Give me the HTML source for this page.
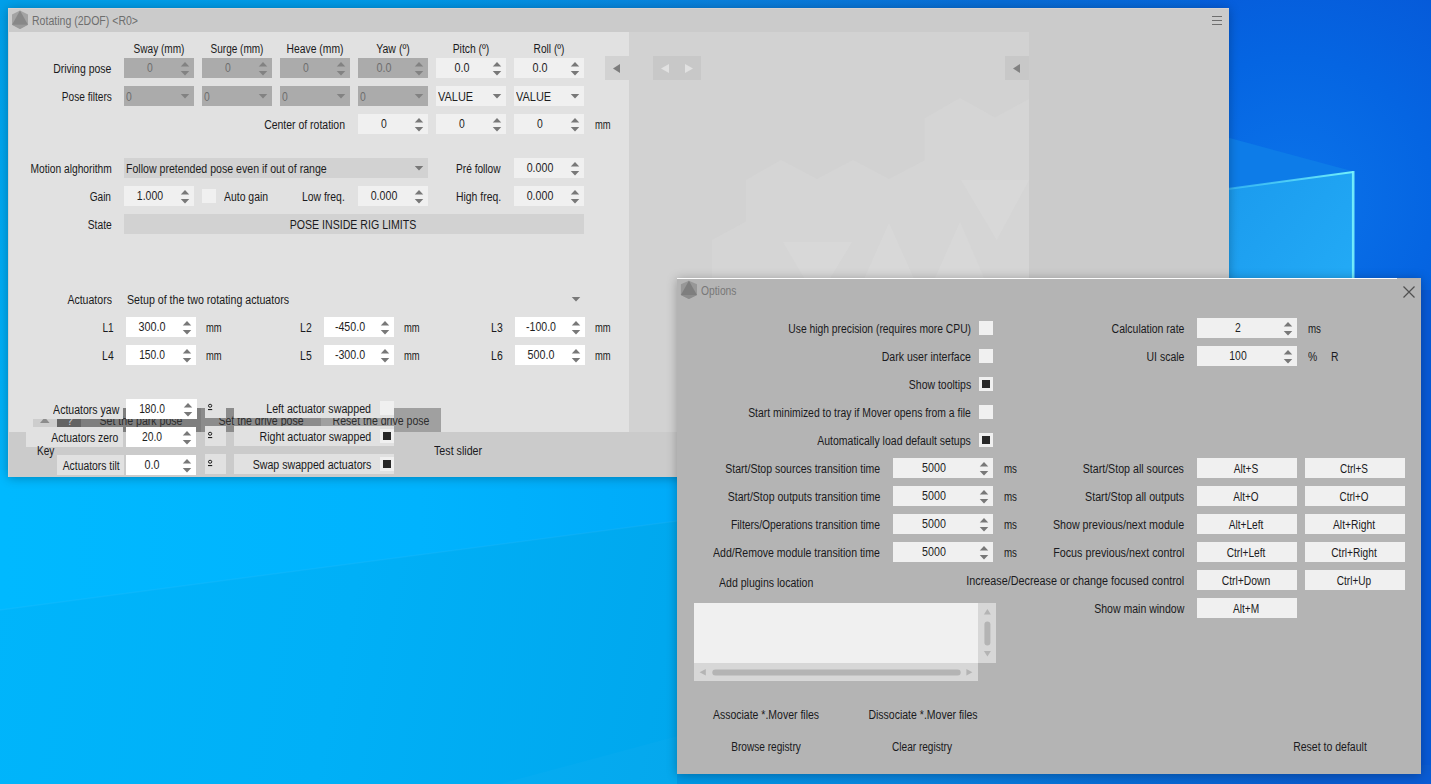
<!DOCTYPE html>
<html><head><meta charset="utf-8"><title>Mover</title><style>
html,body{margin:0;padding:0}
body{width:1431px;height:784px;overflow:hidden;position:relative;background:#00a8ee;font-family:"Liberation Sans",sans-serif;font-size:12.3px;color:#1a1a20}
.b{position:absolute;display:block}
.t{position:absolute;white-space:nowrap;line-height:14px;height:14px;--k:.845}
.t.l{transform-origin:0 50%;transform:scaleX(var(--k))}
.t.r{transform-origin:100% 50%;transform:scaleX(var(--k))}
.t.c{transform-origin:50% 50%;transform:translateX(-50%) scaleX(var(--k))}
#wp{position:absolute;left:0;top:0;width:1431px;height:784px}
</style></head>
<body>
<svg id="wp" width="1431" height="784" viewBox="0 0 1431 784">
<defs>
<linearGradient id="gh" x1="0" y1="0" x2="1431" y2="0" gradientUnits="userSpaceOnUse">
<stop offset="0" stop-color="#009fe9"/><stop offset=".28" stop-color="#0098e6"/><stop offset=".5" stop-color="#0a80dc"/><stop offset=".7" stop-color="#086cd6"/><stop offset=".86" stop-color="#0666dc"/><stop offset="1" stop-color="#0858d0"/>
</linearGradient>
<linearGradient id="gl" x1="0" y1="560" x2="690" y2="700" gradientUnits="userSpaceOnUse">
<stop offset="0" stop-color="#00b5fb"/><stop offset=".5" stop-color="#00b0f7"/><stop offset="1" stop-color="#00a7ed"/>
</linearGradient>
<linearGradient id="gv" x1="0" y1="0" x2="0" y2="520" gradientUnits="userSpaceOnUse">
<stop offset="0" stop-color="#00b5fb" stop-opacity="0"/><stop offset="1" stop-color="#00b5fb" stop-opacity="1"/>
</linearGradient>
<radialGradient id="gr" cx="1290" cy="200" r="260" gradientUnits="userSpaceOnUse">
<stop offset="0" stop-color="#0b74ea"/><stop offset=".55" stop-color="#0565e2"/><stop offset="1" stop-color="#0659d8"/>
</radialGradient>
<linearGradient id="gp" x1="1229" y1="180" x2="1354" y2="290" gradientUnits="userSpaceOnUse">
<stop offset="0" stop-color="#1b9bee"/><stop offset="1" stop-color="#23abf6"/>
</linearGradient>
<linearGradient id="gu" x1="0" y1="0" x2="700" y2="0" gradientUnits="userSpaceOnUse"><stop offset="0" stop-color="#00b9ff"/><stop offset=".6" stop-color="#00b3fe"/><stop offset="1" stop-color="#00aaf8"/></linearGradient>
<linearGradient id="gb" x1="677" y1="0" x2="1431" y2="0" gradientUnits="userSpaceOnUse"><stop offset="0" stop-color="#0098e4"/><stop offset=".3" stop-color="#0a84de"/><stop offset=".58" stop-color="#086cd4"/><stop offset=".85" stop-color="#0a5cce"/><stop offset="1" stop-color="#0a5cd4"/></linearGradient>
<linearGradient id="gs" x1="1229" y1="0" x2="1354" y2="0" gradientUnits="userSpaceOnUse"><stop offset="0" stop-color="#3fc4f6" stop-opacity=".7"/><stop offset="1" stop-color="#74f0fa"/></linearGradient>
</defs>
<rect width="1431" height="784" fill="url(#gh)"/>
<rect x="0" y="0" width="40" height="520" fill="url(#gv)"/>
<rect x="0" y="470" width="700" height="314" fill="url(#gl)"/>
<path d="M0 470H700V518L0 610Z" fill="url(#gu)"/>
<path d="M0 610L700 518" stroke="#fff" stroke-opacity=".04" stroke-width="1.5" fill="none"/>
<path d="M500 784L700 730V784Z" fill="#fff" fill-opacity=".02"/>
<rect x="1200" y="0" width="231" height="300" fill="url(#gr)"/>
<rect x="1400" y="290" width="31" height="494" fill="#0759d6"/>
<rect x="677" y="765" width="754" height="19" fill="url(#gb)"/>
<path d="M1200 130L1353.500 171.500L1200 192Z" fill="#0d7ce8"/>
<path d="M1200 192.800L1353 172V300H1200Z" fill="url(#gp)"/>
<path d="M1200 192.800L1353.200 172" stroke="url(#gs)" stroke-width="2" fill="none"/><path d="M1353.200 171V300" stroke="#7af2fb" stroke-width="2.6" fill="none" stroke-opacity=".92"/>
</svg>

<div class="b" style="left:8px;top:8px;width:1221px;height:469px;background:#cbcbcb;box-shadow:0 1px 10px rgba(0,0,0,.28)"></div>
<div class="b" style="left:8px;top:8px;width:1221px;height:1px;background:#d8d2d0;"></div>
<div class="b" style="left:8px;top:8px;width:1px;height:469px;background:#d4d0ce;"></div>
<div class="b" style="left:9px;top:32px;width:620px;height:400px;background:#e1e1e1;"></div>
<div class="b" style="left:629px;top:32px;width:400px;height:400px;background:#d2d2d2;"></div>
<svg class="b" style="left:629px;top:32px" width="400" height="400" viewBox="0 0 400 400"><g transform="translate(-629 -32)"><path d="M746 180L781 160 817 179 853 160 889 179 924.4 160.6V118.4L960 98 995 117.500 1029 99V432H712V240L746 221.500Z" fill="#d5d5d5"/><path d="M783 242H852L817 300Z M889 223L864.500 278 840 330H938L913.600 278Z M960 222L935 278H984Z M961 180H1029L996.700 240Z" fill="#d8d8d8"/></g></svg>
<svg class="b" style="left:10px;top:9px" width="20" height="22" viewBox="0 0 20 22"><path d="M10 1.6L18 5.5V15.8L10 20 2 15.8V5.5z" fill="#a3a3a3"/><path d="M10 15.8L18 15.8 10 20 2 15.8z" fill="#9a9a9a"/><path d="M10 1.6L18 15.8H2z" fill="#888888"/></svg>
<div class="t l" style="left:32px;top:13.74px;color:#6e6e6e;--k:0.857;">Rotating (2DOF) &lt;R0&gt;</div>
<div class="b" style="left:1212px;top:16px;width:10px;height:1px;background:#6e6e6e;"></div>
<div class="b" style="left:1212px;top:20px;width:10px;height:1px;background:#6e6e6e;"></div>
<div class="b" style="left:1212px;top:24px;width:10px;height:1px;background:#6e6e6e;"></div>
<div class="t c" style="left:159px;top:41.74px;color:#1a1a20;--k:0.819;">Sway (mm)</div>
<div class="t c" style="left:237px;top:41.74px;color:#1a1a20;--k:0.815;">Surge (mm)</div>
<div class="t c" style="left:315px;top:41.74px;color:#1a1a20;--k:0.841;">Heave (mm)</div>
<div class="t c" style="left:393px;top:41.74px;color:#1a1a20;--k:0.856;">Yaw (º)</div>
<div class="t c" style="left:471px;top:41.74px;color:#1a1a20;--k:0.842;">Pitch (º)</div>
<div class="t c" style="left:549px;top:41.74px;color:#1a1a20;--k:0.826;">Roll (º)</div>
<div class="t r" style="right:1319.6px;top:61.74px;color:#1a1a20;--k:0.851;">Driving pose</div>
<div class="t r" style="right:1319.6px;top:89.74px;color:#1a1a20;--k:0.822;">Pose filters</div>
<div class="b" style="left:124px;top:58px;width:70px;height:20px;background:#ababab;"></div>
<svg class="b" style="left:124px;top:58px" width="70" height="20" viewBox="0 0 70 20"><path d="M56.75 8.5L61 4L65.25 8.5Z" fill="#828282"/><path d="M56.75 13L61 17.5L65.25 13Z" fill="#828282"/></svg>
<div class="t c" style="left:150.4px;top:60.74px;color:#6e6e6e;">0</div>
<div class="b" style="left:202px;top:58px;width:70px;height:20px;background:#ababab;"></div>
<svg class="b" style="left:202px;top:58px" width="70" height="20" viewBox="0 0 70 20"><path d="M56.75 8.5L61 4L65.25 8.5Z" fill="#828282"/><path d="M56.75 13L61 17.5L65.25 13Z" fill="#828282"/></svg>
<div class="t c" style="left:228.4px;top:60.74px;color:#6e6e6e;">0</div>
<div class="b" style="left:280px;top:58px;width:70px;height:20px;background:#ababab;"></div>
<svg class="b" style="left:280px;top:58px" width="70" height="20" viewBox="0 0 70 20"><path d="M56.75 8.5L61 4L65.25 8.5Z" fill="#828282"/><path d="M56.75 13L61 17.5L65.25 13Z" fill="#828282"/></svg>
<div class="t c" style="left:306.4px;top:60.74px;color:#6e6e6e;">0</div>
<div class="b" style="left:358px;top:58px;width:70px;height:20px;background:#ababab;"></div>
<svg class="b" style="left:358px;top:58px" width="70" height="20" viewBox="0 0 70 20"><path d="M56.75 8.5L61 4L65.25 8.5Z" fill="#828282"/><path d="M56.75 13L61 17.5L65.25 13Z" fill="#828282"/></svg>
<div class="t c" style="left:384.4px;top:60.74px;color:#6e6e6e;--k:0.877;">0.0</div>
<div class="b" style="left:436px;top:58px;width:70px;height:20px;background:#f0f0f0;"></div>
<svg class="b" style="left:436px;top:58px" width="70" height="20" viewBox="0 0 70 20"><path d="M56.75 8.5L61 4L65.25 8.5Z" fill="#787878"/><path d="M56.75 13L61 17.5L65.25 13Z" fill="#787878"/></svg>
<div class="t c" style="left:462.4px;top:60.74px;color:#1e1e1e;--k:0.877;">0.0</div>
<div class="b" style="left:514px;top:58px;width:70px;height:20px;background:#f0f0f0;"></div>
<svg class="b" style="left:514px;top:58px" width="70" height="20" viewBox="0 0 70 20"><path d="M56.75 8.5L61 4L65.25 8.5Z" fill="#787878"/><path d="M56.75 13L61 17.5L65.25 13Z" fill="#787878"/></svg>
<div class="t c" style="left:540.4px;top:60.74px;color:#1e1e1e;--k:0.877;">0.0</div>
<div class="b" style="left:124px;top:86px;width:70px;height:20px;background:#ababab;"></div>
<svg class="b" style="left:124px;top:86px" width="70" height="20" viewBox="0 0 70 20"><path d="M56.75 8L61 12.5L65.25 8Z" fill="#828282"/></svg>
<div class="t l" style="left:126px;top:89.74px;color:#6e6e6e;">0</div>
<div class="b" style="left:202px;top:86px;width:70px;height:20px;background:#ababab;"></div>
<svg class="b" style="left:202px;top:86px" width="70" height="20" viewBox="0 0 70 20"><path d="M56.75 8L61 12.5L65.25 8Z" fill="#828282"/></svg>
<div class="t l" style="left:204px;top:89.74px;color:#6e6e6e;">0</div>
<div class="b" style="left:280px;top:86px;width:70px;height:20px;background:#ababab;"></div>
<svg class="b" style="left:280px;top:86px" width="70" height="20" viewBox="0 0 70 20"><path d="M56.75 8L61 12.5L65.25 8Z" fill="#828282"/></svg>
<div class="t l" style="left:282px;top:89.74px;color:#6e6e6e;">0</div>
<div class="b" style="left:358px;top:86px;width:70px;height:20px;background:#ababab;"></div>
<svg class="b" style="left:358px;top:86px" width="70" height="20" viewBox="0 0 70 20"><path d="M56.75 8L61 12.5L65.25 8Z" fill="#828282"/></svg>
<div class="t l" style="left:360px;top:89.74px;color:#6e6e6e;">0</div>
<div class="b" style="left:436px;top:86px;width:70px;height:20px;background:#f0f0f0;"></div>
<svg class="b" style="left:436px;top:86px" width="70" height="20" viewBox="0 0 70 20"><path d="M56.75 8L61 12.5L65.25 8Z" fill="#787878"/></svg>
<div class="t l" style="left:438px;top:89.74px;color:#1e1e1e;--k:0.893;">VALUE</div>
<div class="b" style="left:514px;top:86px;width:70px;height:20px;background:#f0f0f0;"></div>
<svg class="b" style="left:514px;top:86px" width="70" height="20" viewBox="0 0 70 20"><path d="M56.75 8L61 12.5L65.25 8Z" fill="#787878"/></svg>
<div class="t l" style="left:516px;top:89.74px;color:#1e1e1e;--k:0.893;">VALUE</div>
<div class="t r" style="right:1086px;top:117.74px;color:#1a1a20;--k:0.851;">Center of rotation</div>
<div class="b" style="left:358px;top:114px;width:70px;height:20px;background:#f0f0f0;"></div>
<svg class="b" style="left:358px;top:114px" width="70" height="20" viewBox="0 0 70 20"><path d="M56.75 8.5L61 4L65.25 8.5Z" fill="#787878"/><path d="M56.75 13L61 17.5L65.25 13Z" fill="#787878"/></svg>
<div class="t c" style="left:384.4px;top:116.74px;color:#1e1e1e;">0</div>
<div class="b" style="left:436px;top:114px;width:70px;height:20px;background:#f0f0f0;"></div>
<svg class="b" style="left:436px;top:114px" width="70" height="20" viewBox="0 0 70 20"><path d="M56.75 8.5L61 4L65.25 8.5Z" fill="#787878"/><path d="M56.75 13L61 17.5L65.25 13Z" fill="#787878"/></svg>
<div class="t c" style="left:462.4px;top:116.74px;color:#1e1e1e;">0</div>
<div class="b" style="left:514px;top:114px;width:70px;height:20px;background:#f0f0f0;"></div>
<svg class="b" style="left:514px;top:114px" width="70" height="20" viewBox="0 0 70 20"><path d="M56.75 8.5L61 4L65.25 8.5Z" fill="#787878"/><path d="M56.75 13L61 17.5L65.25 13Z" fill="#787878"/></svg>
<div class="t c" style="left:540.4px;top:116.74px;color:#1e1e1e;">0</div>
<div class="t l" style="left:594.5px;top:117.74px;color:#1a1a20;--k:0.761;">mm</div>
<div class="b" style="left:605px;top:56px;width:24px;height:24px;background:#d2d2d2;"></div>
<svg class="b" style="left:605px;top:56px" width="24" height="24" viewBox="0 0 24 24"><path d="M8 12.5L15 8v9z" fill="#7d7d7d"/></svg>
<div class="b" style="left:653px;top:56px;width:48px;height:24px;background:#c8c8c8;"></div>
<svg class="b" style="left:653px;top:56px" width="48" height="24" viewBox="0 0 48 24"><path d="M8 12.5L16 8v9z" fill="#e1e1e1"/><path d="M40 12.5L32 8v9z" fill="#e1e1e1"/></svg>
<div class="b" style="left:1005px;top:56px;width:24px;height:24px;background:#c8c8c8;"></div>
<svg class="b" style="left:1005px;top:56px" width="24" height="24" viewBox="0 0 24 24"><path d="M8 12.5L15 8v9z" fill="#828282"/></svg>
<div class="t r" style="right:1319.6px;top:161.74px;color:#1a1a20;--k:0.832;">Motion alghorithm</div>
<div class="b" style="left:124px;top:158px;width:304px;height:20px;background:#d2d2d2;"></div>
<svg class="b" style="left:124px;top:158px" width="304" height="20" viewBox="0 0 304 20"><path d="M290.75 8L295 12.5L299.25 8Z" fill="#787878"/></svg>
<div class="t l" style="left:126px;top:161.74px;color:#1e1e1e;--k:0.861;">Follow pretended pose even if out of range</div>
<div class="t l" style="left:456px;top:161.74px;color:#1a1a20;--k:0.826;">Pré follow</div>
<div class="b" style="left:514px;top:158px;width:70px;height:20px;background:#f0f0f0;"></div>
<svg class="b" style="left:514px;top:158px" width="70" height="20" viewBox="0 0 70 20"><path d="M56.75 8.5L61 4L65.25 8.5Z" fill="#787878"/><path d="M56.75 13L61 17.5L65.25 13Z" fill="#787878"/></svg>
<div class="t c" style="left:540.4px;top:160.74px;color:#1e1e1e;--k:0.864;">0.000</div>
<div class="t r" style="right:1319.6px;top:189.74px;color:#1a1a20;--k:0.82;">Gain</div>
<div class="b" style="left:124px;top:186px;width:70px;height:20px;background:#f0f0f0;"></div>
<svg class="b" style="left:124px;top:186px" width="70" height="20" viewBox="0 0 70 20"><path d="M56.75 8.5L61 4L65.25 8.5Z" fill="#787878"/><path d="M56.75 13L61 17.5L65.25 13Z" fill="#787878"/></svg>
<div class="t c" style="left:150.4px;top:188.74px;color:#1e1e1e;--k:0.854;">1.000</div>
<div class="b" style="left:202px;top:189px;width:14px;height:14px;background:#f0f0f0;"></div>
<div class="t l" style="left:224px;top:189.74px;color:#1a1a20;--k:0.848;">Auto gain</div>
<div class="t l" style="left:302px;top:189.74px;color:#1a1a20;--k:0.846;">Low freq.</div>
<div class="b" style="left:358px;top:186px;width:70px;height:20px;background:#f0f0f0;"></div>
<svg class="b" style="left:358px;top:186px" width="70" height="20" viewBox="0 0 70 20"><path d="M56.75 8.5L61 4L65.25 8.5Z" fill="#787878"/><path d="M56.75 13L61 17.5L65.25 13Z" fill="#787878"/></svg>
<div class="t c" style="left:384.4px;top:188.74px;color:#1e1e1e;--k:0.864;">0.000</div>
<div class="t l" style="left:456px;top:189.74px;color:#1a1a20;--k:0.846;">High freq.</div>
<div class="b" style="left:514px;top:186px;width:70px;height:20px;background:#f0f0f0;"></div>
<svg class="b" style="left:514px;top:186px" width="70" height="20" viewBox="0 0 70 20"><path d="M56.75 8.5L61 4L65.25 8.5Z" fill="#787878"/><path d="M56.75 13L61 17.5L65.25 13Z" fill="#787878"/></svg>
<div class="t c" style="left:540.4px;top:188.74px;color:#1e1e1e;--k:0.864;">0.000</div>
<div class="t r" style="right:1319.6px;top:217.74px;color:#1a1a20;--k:0.836;">State</div>
<div class="b" style="left:124px;top:214px;width:460px;height:20px;background:#d2d2d2;"></div>
<div class="t c" style="left:353px;top:217.74px;color:#1a1a20;--k:0.862;">POSE INSIDE RIG LIMITS</div>
<div class="t r" style="right:1319px;top:292.74px;color:#1a1a20;--k:0.858;">Actuators</div>
<div class="t l" style="left:127px;top:292.74px;color:#1a1a20;--k:0.865;">Setup of the two rotating actuators</div>
<svg class="b" style="left:568px;top:290px" width="17" height="20" viewBox="0 0 17 20"><path d="M3.75 7L8 11.5L12.25 7Z" fill="#787878"/></svg>
<div class="t r" style="right:1317px;top:320.74px;color:#1a1a20;--k:0.819;">L1</div>
<div class="b" style="left:126px;top:317px;width:70px;height:20px;background:#ffffff;"></div>
<svg class="b" style="left:126px;top:317px" width="70" height="20" viewBox="0 0 70 20"><path d="M56.75 8.5L61 4L65.25 8.5Z" fill="#787878"/><path d="M56.75 13L61 17.5L65.25 13Z" fill="#787878"/></svg>
<div class="t c" style="left:152.4px;top:319.74px;color:#1e1e1e;--k:0.88;">300.0</div>
<div class="t l" style="left:206px;top:320.74px;color:#1a1a20;--k:0.761;">mm</div>
<div class="t r" style="right:1119px;top:320.74px;color:#1a1a20;--k:0.848;">L2</div>
<div class="b" style="left:324px;top:317px;width:70px;height:20px;background:#ffffff;"></div>
<svg class="b" style="left:324px;top:317px" width="70" height="20" viewBox="0 0 70 20"><path d="M56.75 8.5L61 4L65.25 8.5Z" fill="#787878"/><path d="M56.75 13L61 17.5L65.25 13Z" fill="#787878"/></svg>
<div class="t c" style="left:350.4px;top:319.74px;color:#1e1e1e;--k:0.866;">-450.0</div>
<div class="t l" style="left:404px;top:320.74px;color:#1a1a20;--k:0.761;">mm</div>
<div class="t r" style="right:928px;top:320.74px;color:#1a1a20;--k:0.848;">L3</div>
<div class="b" style="left:515px;top:317px;width:70px;height:20px;background:#ffffff;"></div>
<svg class="b" style="left:515px;top:317px" width="70" height="20" viewBox="0 0 70 20"><path d="M56.75 8.5L61 4L65.25 8.5Z" fill="#787878"/><path d="M56.75 13L61 17.5L65.25 13Z" fill="#787878"/></svg>
<div class="t c" style="left:541.4px;top:319.74px;color:#1e1e1e;--k:0.86;">-100.0</div>
<div class="t l" style="left:595px;top:320.74px;color:#1a1a20;--k:0.761;">mm</div>
<div class="t r" style="right:1317px;top:348.74px;color:#1a1a20;--k:0.848;">L4</div>
<div class="b" style="left:126px;top:345px;width:70px;height:20px;background:#ffffff;"></div>
<svg class="b" style="left:126px;top:345px" width="70" height="20" viewBox="0 0 70 20"><path d="M56.75 8.5L61 4L65.25 8.5Z" fill="#787878"/><path d="M56.75 13L61 17.5L65.25 13Z" fill="#787878"/></svg>
<div class="t c" style="left:152.4px;top:347.74px;color:#1e1e1e;--k:0.835;">150.0</div>
<div class="t l" style="left:206px;top:348.74px;color:#1a1a20;--k:0.761;">mm</div>
<div class="t r" style="right:1119px;top:348.74px;color:#1a1a20;--k:0.848;">L5</div>
<div class="b" style="left:324px;top:345px;width:70px;height:20px;background:#ffffff;"></div>
<svg class="b" style="left:324px;top:345px" width="70" height="20" viewBox="0 0 70 20"><path d="M56.75 8.5L61 4L65.25 8.5Z" fill="#787878"/><path d="M56.75 13L61 17.5L65.25 13Z" fill="#787878"/></svg>
<div class="t c" style="left:350.4px;top:347.74px;color:#1e1e1e;--k:0.866;">-300.0</div>
<div class="t l" style="left:404px;top:348.74px;color:#1a1a20;--k:0.761;">mm</div>
<div class="t r" style="right:928px;top:348.74px;color:#1a1a20;--k:0.848;">L6</div>
<div class="b" style="left:515px;top:345px;width:70px;height:20px;background:#ffffff;"></div>
<svg class="b" style="left:515px;top:345px" width="70" height="20" viewBox="0 0 70 20"><path d="M56.75 8.5L61 4L65.25 8.5Z" fill="#787878"/><path d="M56.75 13L61 17.5L65.25 13Z" fill="#787878"/></svg>
<div class="t c" style="left:541.4px;top:347.74px;color:#1e1e1e;--k:0.874;">500.0</div>
<div class="t l" style="left:595px;top:348.74px;color:#1a1a20;--k:0.761;">mm</div>
<div class="b" style="left:33px;top:408px;width:24px;height:24px;background:#cdcdcd;"></div>
<svg class="b" style="left:33px;top:408px" width="24" height="24" viewBox="0 0 24 24"><path d="M7.000000000000001 15.0L11.8 9.2L16.6 15.0Z" fill="#8c8c8c"/></svg>
<div class="b" style="left:57px;top:408px;width:24px;height:24px;background:#646464;"></div>
<div class="t c" style="left:69.6px;top:413.74px;color:#d0d0d8;">?</div>
<div class="b" style="left:81px;top:408px;width:120px;height:24px;background:#7e7e7e;"></div>
<div class="t c" style="left:140.5px;top:413.74px;color:#2d2d2d;--k:0.861;">Set the park pose</div>
<div class="b" style="left:201px;top:408px;width:120px;height:24px;background:#8c8c8c;"></div>
<div class="t c" style="left:260.6px;top:413.74px;color:#2d2d2d;--k:0.859;">Set the drive pose</div>
<div class="b" style="left:321px;top:408px;width:120px;height:24px;background:#a0a0a0;"></div>
<div class="t c" style="left:380.6px;top:413.74px;color:#2d2d2d;--k:0.859;">Reset the drive pose</div>
<div class="b" style="left:26px;top:399px;width:97px;height:20px;background:#e1e1e1;"></div>
<div class="t r" style="right:1311.8px;top:403.04px;color:#1a1a20;--k:0.856;">Actuators yaw</div>
<div class="b" style="left:126px;top:399px;width:71px;height:20px;background:#ffffff;"></div>
<svg class="b" style="left:126px;top:399px" width="71" height="20" viewBox="0 0 71 20"><path d="M57.75 8.5L62 4L66.25 8.5Z" fill="#787878"/><path d="M57.75 13L62 17.5L66.25 13Z" fill="#787878"/></svg>
<div class="t c" style="left:152.4px;top:401.74px;color:#1e1e1e;--k:0.835;">180.0</div>
<div class="b" style="left:205px;top:398px;width:21px;height:20px;background:#e1e1e1;"></div>
<svg class="b" style="left:206px;top:402px" width="10" height="10" viewBox="0 0 10 10"><ellipse cx="4.1" cy="3.75" rx="1.65" ry="1.5" fill="none" stroke="#1e1e1e" stroke-width="1"/><rect x="2" y="7" width="4.2" height="1.1" fill="#1e1e1e"/></svg>
<div class="b" style="left:234px;top:398px;width:160px;height:20px;background:#e1e1e1;"></div>
<div class="t r" style="right:1060px;top:401.94px;color:#1a1a20;--k:0.866;">Left actuator swapped</div>
<div class="b" style="left:380px;top:401px;width:14px;height:14px;background:#f0f0f0;"></div>
<div class="b" style="left:26px;top:427px;width:97px;height:20px;background:#e1e1e1;"></div>
<div class="t r" style="right:1312.8px;top:431.04px;color:#1a1a20;--k:0.845;">Actuators zero</div>
<div class="b" style="left:126px;top:427px;width:70px;height:20px;background:#ffffff;"></div>
<svg class="b" style="left:126px;top:427px" width="70" height="20" viewBox="0 0 70 20"><path d="M56.75 8.5L61 4L65.25 8.5Z" fill="#787878"/><path d="M56.75 13L61 17.5L65.25 13Z" fill="#787878"/></svg>
<div class="t c" style="left:152.4px;top:429.74px;color:#1e1e1e;--k:0.84;">20.0</div>
<div class="b" style="left:205px;top:426px;width:21px;height:20px;background:#e1e1e1;"></div>
<svg class="b" style="left:206px;top:430px" width="10" height="10" viewBox="0 0 10 10"><ellipse cx="4.1" cy="3.75" rx="1.65" ry="1.5" fill="none" stroke="#1e1e1e" stroke-width="1"/><rect x="2" y="7" width="4.2" height="1.1" fill="#1e1e1e"/></svg>
<div class="b" style="left:234px;top:426px;width:160px;height:20px;background:#e1e1e1;"></div>
<div class="t r" style="right:1060px;top:429.94px;color:#1a1a20;--k:0.864;">Right actuator swapped</div>
<div class="b" style="left:380px;top:429px;width:14px;height:14px;background:#f0f0f0;"></div>
<div class="b" style="left:383px;top:432px;width:8px;height:8px;background:#282828;"></div>
<div class="b" style="left:57px;top:455px;width:67px;height:20px;background:#e1e1e1;"></div>
<div class="t r" style="right:1311.8px;top:459.04px;color:#1a1a20;--k:0.842;">Actuators tilt</div>
<div class="b" style="left:126px;top:455px;width:70px;height:20px;background:#ffffff;"></div>
<svg class="b" style="left:126px;top:455px" width="70" height="20" viewBox="0 0 70 20"><path d="M56.75 8.5L61 4L65.25 8.5Z" fill="#787878"/><path d="M56.75 13L61 17.5L65.25 13Z" fill="#787878"/></svg>
<div class="t c" style="left:152.4px;top:457.74px;color:#1e1e1e;--k:0.877;">0.0</div>
<div class="b" style="left:205px;top:454px;width:21px;height:20px;background:#e1e1e1;"></div>
<svg class="b" style="left:206px;top:458px" width="10" height="10" viewBox="0 0 10 10"><ellipse cx="4.1" cy="3.75" rx="1.65" ry="1.5" fill="none" stroke="#1e1e1e" stroke-width="1"/><rect x="2" y="7" width="4.2" height="1.1" fill="#1e1e1e"/></svg>
<div class="b" style="left:234px;top:454px;width:160px;height:20px;background:#e1e1e1;"></div>
<div class="t r" style="right:1060px;top:457.94px;color:#1a1a20;--k:0.864;">Swap swapped actuators</div>
<div class="b" style="left:380px;top:457px;width:14px;height:14px;background:#f0f0f0;"></div>
<div class="b" style="left:383px;top:460px;width:8px;height:8px;background:#282828;"></div>
<div class="t l" style="left:37px;top:443.74px;color:#1a1a20;--k:0.821;">Key</div>
<div class="t l" style="left:434px;top:443.74px;color:#1a1a20;--k:0.869;">Test slider</div>
<div class="b" style="left:677px;top:278px;width:744px;height:496px;background:#b4b4b4;box-shadow:0 1px 10px rgba(0,0,0,.28)"></div>
<div class="b" style="left:677px;top:278px;width:720px;height:1px;background:#fcfcfc;"></div>
<svg class="b" style="left:679px;top:280px" width="20" height="20" viewBox="0 0 20 20"><path d="M9.9 .7L18 4.3V14.9L9.9 18.9 1.9 14.9V4.3z" fill="#979797"/><path d="M9.9 .7L18 14.9H1.9z" fill="#7e7e7e"/><path d="M1.9 14.9H18L9.9 18.9z" fill="#8c8c8c"/></svg>
<div class="t l" style="left:701px;top:283.74px;color:#787878;--k:0.837;">Options</div>
<svg class="b" style="left:1402px;top:285px" width="14" height="14" viewBox="0 0 14 14"><path d="M1.5 1.5L12.5 12.5M12.5 1.5L1.5 12.5" stroke="#505050" stroke-width="1.2" fill="none"/></svg>
<div class="t r" style="right:460px;top:321.74px;color:#1a1a20;--k:0.838;">Use high precision (requires more CPU)</div>
<div class="b" style="left:979px;top:321px;width:14px;height:14px;background:#f0f0f0;"></div>
<div class="t r" style="right:460px;top:349.74px;color:#1a1a20;--k:0.858;">Dark user interface</div>
<div class="b" style="left:979px;top:349px;width:14px;height:14px;background:#f0f0f0;"></div>
<div class="t r" style="right:460px;top:377.74px;color:#1a1a20;--k:0.852;">Show tooltips</div>
<div class="b" style="left:979px;top:377px;width:14px;height:14px;background:#f0f0f0;"></div>
<div class="b" style="left:982px;top:380px;width:8px;height:8px;background:#282828;"></div>
<div class="t r" style="right:460px;top:405.74px;color:#1a1a20;--k:0.844;">Start minimized to tray if Mover opens from a file</div>
<div class="b" style="left:979px;top:405px;width:14px;height:14px;background:#f0f0f0;"></div>
<div class="t r" style="right:460px;top:433.74px;color:#1a1a20;--k:0.854;">Automatically load default setups</div>
<div class="b" style="left:979px;top:433px;width:14px;height:14px;background:#f0f0f0;"></div>
<div class="b" style="left:982px;top:436px;width:8px;height:8px;background:#282828;"></div>
<div class="t r" style="right:551px;top:461.74px;color:#1a1a20;--k:0.855;">Start/Stop sources transition time</div>
<div class="b" style="left:893px;top:458px;width:100px;height:20px;background:#f0f0f0;"></div>
<svg class="b" style="left:893px;top:458px" width="100" height="20" viewBox="0 0 100 20"><path d="M86.75 8.5L91 4L95.25 8.5Z" fill="#787878"/><path d="M86.75 13L91 17.5L95.25 13Z" fill="#787878"/></svg>
<div class="t c" style="left:934px;top:460.74px;color:#1e1e1e;--k:0.87;">5000</div>
<div class="t l" style="left:1003.5px;top:461.74px;color:#1a1a20;--k:0.793;">ms</div>
<div class="t r" style="right:551px;top:489.74px;color:#1a1a20;--k:0.856;">Start/Stop outputs transition time</div>
<div class="b" style="left:893px;top:486px;width:100px;height:20px;background:#f0f0f0;"></div>
<svg class="b" style="left:893px;top:486px" width="100" height="20" viewBox="0 0 100 20"><path d="M86.75 8.5L91 4L95.25 8.5Z" fill="#787878"/><path d="M86.75 13L91 17.5L95.25 13Z" fill="#787878"/></svg>
<div class="t c" style="left:934px;top:488.74px;color:#1e1e1e;--k:0.87;">5000</div>
<div class="t l" style="left:1003.5px;top:489.74px;color:#1a1a20;--k:0.793;">ms</div>
<div class="t r" style="right:551px;top:517.74px;color:#1a1a20;--k:0.842;">Filters/Operations transition time</div>
<div class="b" style="left:893px;top:514px;width:100px;height:20px;background:#f0f0f0;"></div>
<svg class="b" style="left:893px;top:514px" width="100" height="20" viewBox="0 0 100 20"><path d="M86.75 8.5L91 4L95.25 8.5Z" fill="#787878"/><path d="M86.75 13L91 17.5L95.25 13Z" fill="#787878"/></svg>
<div class="t c" style="left:934px;top:516.74px;color:#1e1e1e;--k:0.87;">5000</div>
<div class="t l" style="left:1003.5px;top:517.74px;color:#1a1a20;--k:0.793;">ms</div>
<div class="t r" style="right:551px;top:545.74px;color:#1a1a20;--k:0.856;">Add/Remove module transition time</div>
<div class="b" style="left:893px;top:542px;width:100px;height:20px;background:#f0f0f0;"></div>
<svg class="b" style="left:893px;top:542px" width="100" height="20" viewBox="0 0 100 20"><path d="M86.75 8.5L91 4L95.25 8.5Z" fill="#787878"/><path d="M86.75 13L91 17.5L95.25 13Z" fill="#787878"/></svg>
<div class="t c" style="left:934px;top:544.74px;color:#1e1e1e;--k:0.87;">5000</div>
<div class="t l" style="left:1003.5px;top:545.74px;color:#1a1a20;--k:0.793;">ms</div>
<div class="t r" style="right:247px;top:321.74px;color:#1a1a20;--k:0.853;">Calculation rate</div>
<div class="b" style="left:1197px;top:318px;width:100px;height:20px;background:#f0f0f0;"></div>
<svg class="b" style="left:1197px;top:318px" width="100" height="20" viewBox="0 0 100 20"><path d="M86.75 8.5L91 4L95.25 8.5Z" fill="#787878"/><path d="M86.75 13L91 17.5L95.25 13Z" fill="#787878"/></svg>
<div class="t c" style="left:1238px;top:320.74px;color:#1e1e1e;">2</div>
<div class="t l" style="left:1307.5px;top:321.74px;color:#1a1a20;--k:0.793;">ms</div>
<div class="t r" style="right:247px;top:349.74px;color:#1a1a20;--k:0.853;">UI scale</div>
<div class="b" style="left:1197px;top:346px;width:100px;height:20px;background:#f0f0f0;"></div>
<svg class="b" style="left:1197px;top:346px" width="100" height="20" viewBox="0 0 100 20"><path d="M86.75 8.5L91 4L95.25 8.5Z" fill="#787878"/><path d="M86.75 13L91 17.5L95.25 13Z" fill="#787878"/></svg>
<div class="t c" style="left:1238px;top:348.74px;color:#1e1e1e;--k:0.848;">100</div>
<div class="t l" style="left:1308px;top:349.74px;color:#1a1a20;">%</div>
<div class="t l" style="left:1331px;top:349.74px;color:#1a1a20;">R</div>
<div class="t r" style="right:247px;top:461.74px;color:#1a1a20;--k:0.866;">Start/Stop all sources</div>
<div class="b" style="left:1197px;top:458px;width:100px;height:20px;background:#f0f0f0;"></div>
<div class="t c" style="left:1246.2px;top:461.74px;color:#1a1a20;--k:0.827;">Alt+S</div>
<div class="b" style="left:1305px;top:458px;width:100px;height:20px;background:#f0f0f0;"></div>
<div class="t c" style="left:1354px;top:461.74px;color:#1a1a20;--k:0.811;">Ctrl+S</div>
<div class="t r" style="right:247px;top:489.74px;color:#1a1a20;--k:0.868;">Start/Stop all outputs</div>
<div class="b" style="left:1197px;top:486px;width:100px;height:20px;background:#f0f0f0;"></div>
<div class="t c" style="left:1246.2px;top:489.74px;color:#1a1a20;--k:0.813;">Alt+O</div>
<div class="b" style="left:1305px;top:486px;width:100px;height:20px;background:#f0f0f0;"></div>
<div class="t c" style="left:1354px;top:489.74px;color:#1a1a20;--k:0.806;">Ctrl+O</div>
<div class="t r" style="right:247px;top:517.74px;color:#1a1a20;--k:0.868;">Show previous/next module</div>
<div class="b" style="left:1197px;top:514px;width:100px;height:20px;background:#f0f0f0;"></div>
<div class="t c" style="left:1246.2px;top:517.74px;color:#1a1a20;--k:0.825;">Alt+Left</div>
<div class="b" style="left:1305px;top:514px;width:100px;height:20px;background:#f0f0f0;"></div>
<div class="t c" style="left:1354px;top:517.74px;color:#1a1a20;--k:0.836;">Alt+Right</div>
<div class="t r" style="right:247px;top:545.74px;color:#1a1a20;--k:0.872;">Focus previous/next control</div>
<div class="b" style="left:1197px;top:542px;width:100px;height:20px;background:#f0f0f0;"></div>
<div class="t c" style="left:1246.2px;top:545.74px;color:#1a1a20;--k:0.824;">Ctrl+Left</div>
<div class="b" style="left:1305px;top:542px;width:100px;height:20px;background:#f0f0f0;"></div>
<div class="t c" style="left:1354px;top:545.74px;color:#1a1a20;--k:0.827;">Ctrl+Right</div>
<div class="t r" style="right:247px;top:573.74px;color:#1a1a20;--k:0.878;">Increase/Decrease or change focused control</div>
<div class="b" style="left:1197px;top:570px;width:100px;height:20px;background:#f0f0f0;"></div>
<div class="t c" style="left:1246.2px;top:573.74px;color:#1a1a20;--k:0.843;">Ctrl+Down</div>
<div class="b" style="left:1305px;top:570px;width:100px;height:20px;background:#f0f0f0;"></div>
<div class="t c" style="left:1354px;top:573.74px;color:#1a1a20;--k:0.818;">Ctrl+Up</div>
<div class="t r" style="right:247px;top:601.74px;color:#1a1a20;--k:0.855;">Show main window</div>
<div class="b" style="left:1197px;top:598px;width:100px;height:20px;background:#f0f0f0;"></div>
<div class="t c" style="left:1246.2px;top:601.74px;color:#1a1a20;--k:0.824;">Alt+M</div>
<div class="t l" style="left:719px;top:575.74px;color:#1a1a20;--k:0.857;">Add plugins location</div>
<div class="b" style="left:694px;top:603px;width:284px;height:60px;background:#f0f0f0;"></div>
<div class="b" style="left:978px;top:603px;width:18px;height:60px;background:#d7d7d7;"></div>
<div class="b" style="left:694px;top:663px;width:284px;height:18px;background:#d7d7d7;"></div>
<svg class="b" style="left:978px;top:603px" width="18" height="60" viewBox="0 0 18 60"><path d="M5.9 11.5L9.4 6L12.9 11.5Z" fill="#b4b4b4"/><rect x="6.4" y="18.6" width="6" height="24" rx="3" fill="#b4b4b4"/><path d="M5.9 48L9.4 53.5L12.9 48Z" fill="#b4b4b4"/></svg>
<svg class="b" style="left:694px;top:663px" width="284" height="18" viewBox="0 0 284 18"><path d="M5.6 9.3L11.8 6v6.6z" fill="#b4b4b4"/><rect x="18.3" y="6.4" width="248.4" height="6" rx="3" fill="#b4b4b4"/><path d="M278.4 9.3L272.4 6v6.6z" fill="#b4b4b4"/></svg>
<div class="t c" style="left:766px;top:707.74px;color:#1a1a20;--k:0.854;">Associate *.Mover files</div>
<div class="t c" style="left:922.7px;top:707.74px;color:#1a1a20;--k:0.854;">Dissociate *.Mover files</div>
<div class="t c" style="left:766px;top:739.74px;color:#1a1a20;--k:0.822;">Browse registry</div>
<div class="t c" style="left:922.4px;top:739.74px;color:#1a1a20;--k:0.819;">Clear registry</div>
<div class="t c" style="left:1330px;top:739.74px;color:#1a1a20;--k:0.855;">Reset to default</div>
</body></html>
